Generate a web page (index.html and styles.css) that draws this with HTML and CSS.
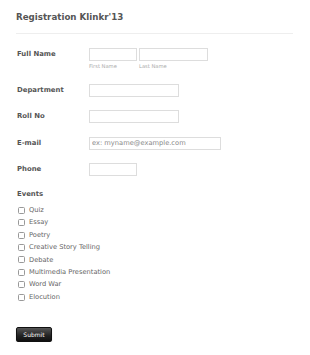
FILE: index.html
```html
<!DOCTYPE html>
<html>
<head>
  <meta charset="utf-8">
  <title>Registration Klinkr'13</title>
  <link rel="stylesheet" href="styles.css">
</head>
<body>
  <form class="form">
    <h2 class="form-title">Registration Klinkr'13</h2>
    <hr class="divider">

    <div class="row">
      <label class="label">Full Name</label>
      <div class="fields">
        <div class="sub">
          <input type="text" class="input short">
          <span class="sublabel">First Name</span>
        </div>
        <div class="sub">
          <input type="text" class="input last">
          <span class="sublabel">Last Name</span>
        </div>
      </div>
    </div>

    <div class="row">
      <label class="label">Department</label>
      <input type="text" class="input medium">
    </div>

    <div class="row">
      <label class="label">Roll No</label>
      <input type="text" class="input medium">
    </div>

    <div class="row">
      <label class="label">E-mail</label>
      <input type="email" class="input long" placeholder="ex: myname@example.com">
    </div>

    <div class="row">
      <label class="label">Phone</label>
      <input type="text" class="input short">
    </div>

    <div class="events">
      <div class="events-title">Events</div>
      <label class="check"><input type="checkbox"> Quiz</label>
      <label class="check"><input type="checkbox"> Essay</label>
      <label class="check"><input type="checkbox"> Poetry</label>
      <label class="check"><input type="checkbox"> Creative Story Telling</label>
      <label class="check"><input type="checkbox"> Debate</label>
      <label class="check"><input type="checkbox"> Multimedia Presentation</label>
      <label class="check"><input type="checkbox"> Word War</label>
      <label class="check"><input type="checkbox"> Elocution</label>
    </div>

    <button type="submit" class="submit">Submit</button>
  </form>
</body>
</html>
```

FILE: styles.css
```css
body {
  font-family: "DejaVu Sans", Verdana, sans-serif;
  margin: 0;
  padding: 11px 17px 0 16px;
  background: #fff;
  color: #555;
}

.form {
  width: 277px;
}

.form-title {
  font-size: 8.7px;
  line-height: 12px;
  font-weight: bold;
  color: #555;
  margin: 0;
}

.divider {
  border: none;
  border-top: 1px solid #eee;
  margin: 10px 0 14px 0;
}

.row {
  display: flex;
  align-items: flex-start;
  margin-bottom: 13.5px;
}

.label {
  width: 72px;
  font-size: 6.9px;
  line-height: 13px;
  font-weight: bold;
  color: #555;
  padding-left: 1px;
}

.fields {
  display: flex;
  gap: 2px;
}

.sub {
  display: flex;
  flex-direction: column;
}

.sublabel {
  font-size: 5.2px;
  line-height: 7px;
  margin-top: 2px;
  color: #aaa;
}

.input {
  box-sizing: border-box;
  height: 13px;
  border: 1px solid #ddd;
  padding: 0 2px;
  margin: 0;
  font-family: "DejaVu Sans", Verdana, sans-serif;
  font-size: 6.7px;
  color: #666;
  background: #fff;
  outline: none;
}

.input::placeholder {
  color: #888;
}

.short {
  width: 48px;
}

.last {
  width: 69px;
}

.medium {
  width: 90px;
}

.long {
  width: 132px;
}

.events {
  margin-top: 14px;
}

.events-title {
  font-size: 6.9px;
  line-height: 9px;
  font-weight: bold;
  color: #555;
  margin-bottom: 5px;
  padding-left: 1px;
}

.check {
  display: flex;
  align-items: center;
  font-size: 6.7px;
  line-height: 12.4px;
  color: #666;
  padding-left: 2px;
}

.check input {
  appearance: none;
  -webkit-appearance: none;
  box-sizing: border-box;
  width: 7px;
  height: 7px;
  margin: 0 4px 0 0;
  border: 1px solid #999;
  border-radius: 1.5px;
  background: #fff;
}

.submit {
  margin-top: 24px;
  box-sizing: border-box;
  width: 36px;
  height: 15px;
  padding: 0;
  border: 1px solid #111;
  border-radius: 2px;
  background: linear-gradient(#555, #222 60%, #111);
  color: #fff;
  font-family: "DejaVu Sans", Verdana, sans-serif;
  font-size: 6px;
  box-shadow: 0 1px 1px rgba(0, 0, 0, 0.3);
}
```
